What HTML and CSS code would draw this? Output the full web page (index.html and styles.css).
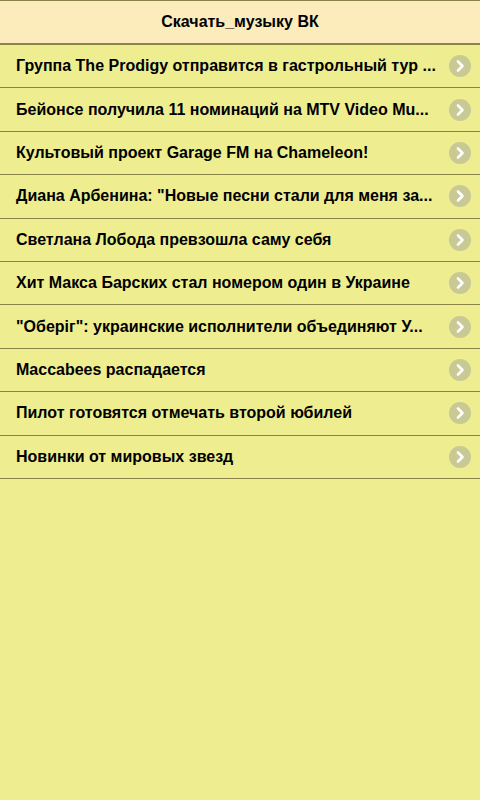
FILE: index.html
```html
<!DOCTYPE html>
<html>
<head>
<meta charset="utf-8">
<link rel="stylesheet" href="styles.css">
</head>
<body>
<div class="header">Скачать_музыку ВК</div>
<ul class="list">
  <li class="row"><span class="title">Группа The Prodigy отправится в гастрольный тур ...</span><span class="arrow"><svg viewBox="0 0 22 22" width="22" height="22"><circle cx="11" cy="11" r="11" fill="#c9c995"/><path d="M9 6.5 L13.5 11 L9 15.5" fill="none" stroke="#fff" stroke-width="2.6" stroke-linecap="round" stroke-linejoin="round"/></svg></span></li>
  <li class="row"><span class="title">Бейонсе получила 11 номинаций на MTV Video Mu...</span><span class="arrow"><svg viewBox="0 0 22 22" width="22" height="22"><circle cx="11" cy="11" r="11" fill="#c9c995"/><path d="M9 6.5 L13.5 11 L9 15.5" fill="none" stroke="#fff" stroke-width="2.6" stroke-linecap="round" stroke-linejoin="round"/></svg></span></li>
  <li class="row"><span class="title">Культовый проект Garage FM на Chameleon!</span><span class="arrow"><svg viewBox="0 0 22 22" width="22" height="22"><circle cx="11" cy="11" r="11" fill="#c9c995"/><path d="M9 6.5 L13.5 11 L9 15.5" fill="none" stroke="#fff" stroke-width="2.6" stroke-linecap="round" stroke-linejoin="round"/></svg></span></li>
  <li class="row"><span class="title">Диана Арбенина: "Новые песни стали для меня за...</span><span class="arrow"><svg viewBox="0 0 22 22" width="22" height="22"><circle cx="11" cy="11" r="11" fill="#c9c995"/><path d="M9 6.5 L13.5 11 L9 15.5" fill="none" stroke="#fff" stroke-width="2.6" stroke-linecap="round" stroke-linejoin="round"/></svg></span></li>
  <li class="row"><span class="title">Светлана Лобода превзошла саму себя</span><span class="arrow"><svg viewBox="0 0 22 22" width="22" height="22"><circle cx="11" cy="11" r="11" fill="#c9c995"/><path d="M9 6.5 L13.5 11 L9 15.5" fill="none" stroke="#fff" stroke-width="2.6" stroke-linecap="round" stroke-linejoin="round"/></svg></span></li>
  <li class="row"><span class="title">Хит Макса Барских стал номером один в Украине</span><span class="arrow"><svg viewBox="0 0 22 22" width="22" height="22"><circle cx="11" cy="11" r="11" fill="#c9c995"/><path d="M9 6.5 L13.5 11 L9 15.5" fill="none" stroke="#fff" stroke-width="2.6" stroke-linecap="round" stroke-linejoin="round"/></svg></span></li>
  <li class="row"><span class="title">"Оберіг": украинские исполнители объединяют У...</span><span class="arrow"><svg viewBox="0 0 22 22" width="22" height="22"><circle cx="11" cy="11" r="11" fill="#c9c995"/><path d="M9 6.5 L13.5 11 L9 15.5" fill="none" stroke="#fff" stroke-width="2.6" stroke-linecap="round" stroke-linejoin="round"/></svg></span></li>
  <li class="row"><span class="title">Maccabees распадается</span><span class="arrow"><svg viewBox="0 0 22 22" width="22" height="22"><circle cx="11" cy="11" r="11" fill="#c9c995"/><path d="M9 6.5 L13.5 11 L9 15.5" fill="none" stroke="#fff" stroke-width="2.6" stroke-linecap="round" stroke-linejoin="round"/></svg></span></li>
  <li class="row"><span class="title">Пилот готовятся отмечать второй юбилей</span><span class="arrow"><svg viewBox="0 0 22 22" width="22" height="22"><circle cx="11" cy="11" r="11" fill="#c9c995"/><path d="M9 6.5 L13.5 11 L9 15.5" fill="none" stroke="#fff" stroke-width="2.6" stroke-linecap="round" stroke-linejoin="round"/></svg></span></li>
  <li class="row"><span class="title">Новинки от мировых звезд</span><span class="arrow"><svg viewBox="0 0 22 22" width="22" height="22"><circle cx="11" cy="11" r="11" fill="#c9c995"/><path d="M9 6.5 L13.5 11 L9 15.5" fill="none" stroke="#fff" stroke-width="2.6" stroke-linecap="round" stroke-linejoin="round"/></svg></span></li>
</ul>
</body>
</html>
```
FILE: styles.css
```css
html, body {
  margin: 0;
  padding: 0;
  height: 100%;
}
body {
  background: #eeee90;
  font-family: "Liberation Sans", Arial, sans-serif;
  color: #000;
}
.header {
  box-sizing: border-box;
  height: 45px;
  background: #fcecbb;
  border-top: 1px solid #8a8448;
  border-bottom: 2px solid #8a8448;
  display: flex;
  align-items: center;
  justify-content: center;
  font-weight: bold;
  font-size: 16px;
}
.list {
  list-style: none;
  margin: 0;
  padding: 0;
}
.row {
  box-sizing: border-box;
  height: 43.4px;
  border-bottom: 1px solid #8a8448;
  display: flex;
  align-items: center;
  padding: 0 9px 0 16px;
}
.title {
  flex: 1;
  min-width: 0;
  white-space: nowrap;
  font-weight: bold;
  font-size: 16px;
  padding-right: 8px;
}
.arrow {
  display: flex;
  width: 22px;
  height: 22px;
}
```
